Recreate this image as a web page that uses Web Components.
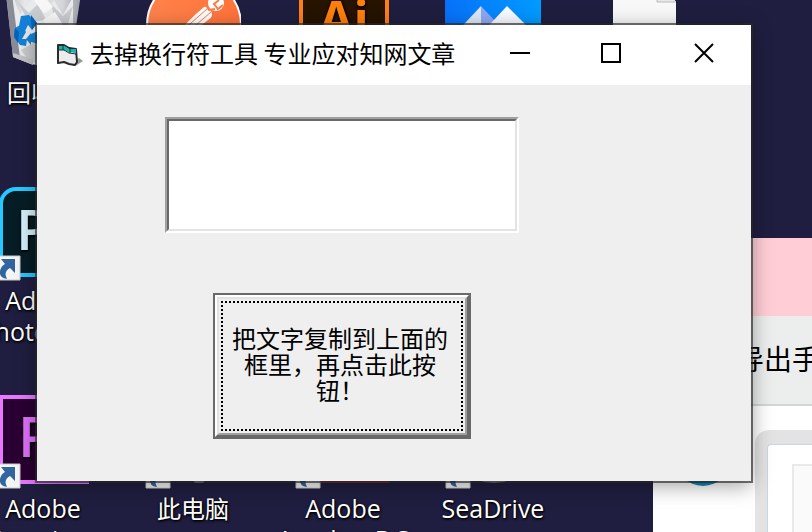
<!DOCTYPE html>
<html lang="zh-CN">
<head>
<meta charset="utf-8">
<title>去掉换行符工具</title>
<style>
html, body { height: 100%; margin: 0; overflow: hidden; }
body { background: #201e40; font: 24px/31px "Open Sans", "Noto Sans CJK SC", sans-serif; }
</style>
</head>
<body>
<desk-top>
  <desk-icon label="回收站">
    <svg viewBox="0 0 96 96" aria-hidden="true">
      <defs><linearGradient id="bin" x2="1"><stop stop-color="#b4b6bb"/><stop offset=".25" stop-color="#e6e7e8"/><stop offset=".75" stop-color="#d5d6d8"/><stop offset="1" stop-color="#9b9da8"/></linearGradient></defs>
      <path d="M11 17H86L76 82Q58 92 36 87L18 80Z" fill="url(#bin)"/>
      <path d="M17 17l8 20 13-16 10 18 11-16 9 15 10-18v30L66 82H36L22 76Z" fill="#e9eaeb"/>
      <path d="M22 24l12 12 9-9 8 16-17 2zM56 27l12 12 10-10-6 22-12-8zM26 73l14-8 8 20-13 1z" fill="#c9cbce"/>
      <path d="M38 22l10-4 10 12-9 7zM48 43l12-8 10 16-10 12z" fill="#f7f7f7"/>
      <path d="M11 17l7 63 7 1-8-64z" fill="#898b96"/>
      <path d="M18 76l20 6v6l-20-8z" fill="#c3c3c5"/>
      <path d="M26 39l8-1 8 8-5 7-4-5-3 6-6-5zM20 51l7-4 4 8-4 7h5l-1 7-6-1-6-9zM36 57l9-4-1 14-8-2v3l-5-6 5-6z" fill="#1581d8"/>
      <path d="M20 51l4 4-1 11-4-6zM36 38l6 8-5 7-1-8z" fill="#0563b7"/>
    </svg>
  </desk-icon>
  <desk-icon label="Adobe Photoshop" lang="en" shortcut>
    <svg viewBox="0 0 96 96" aria-hidden="true">
      <rect x="6" y="4" width="86" height="86" rx="15" fill="#071d26" stroke="#26c9ff" stroke-width="4"/>
      <text x="21" y="65" font-family="Open Sans, sans-serif" font-size="56" font-weight="600" fill="#d5f0fb">Ps</text>
    </svg>
  </desk-icon>
  <desk-icon label="Adobe Premiere" lang="en" shortcut>
    <svg viewBox="0 0 96 96" aria-hidden="true">
      <rect x="6" y="4" width="86" height="85" fill="#2a0032" stroke="#e878ff" stroke-width="4"/>
      <text x="23" y="64" font-family="Open Sans, sans-serif" font-size="56" font-weight="600" fill="#e070fa">Pr</text>
    </svg>
  </desk-icon>

  <desk-icon>
    <svg viewBox="0 0 96 96" aria-hidden="true">
      <defs><linearGradient id="pm" x2="1"><stop stop-color="#ff824b"/><stop offset="1" stop-color="#ff7339"/></linearGradient></defs>
      <circle cx="49" cy="48" r="47" fill="url(#pm)" stroke="#fff" stroke-width="2"/>
      <circle cx="71" cy="26" r="8" fill="#fff"/>
      <path d="M59 30Q63 29 66 34Q69 40 63 43L40 61L29 61Q42 44 59 30Z" fill="#fff"/>
      <path d="M62 32L30 60M66 35L37 60" stroke="#ff7b43" fill="none"/>
      <path d="M74 23l-5 4 4 5 5-4M61 28l3 5 6-1" stroke="#ff7b43" stroke-width="2" fill="none"/>
    </svg>
  </desk-icon>
  <desk-icon></desk-icon>
  <desk-icon label="此电脑" shortcut>
    <svg viewBox="0 0 96 96" aria-hidden="true"><path d="M46 85H62L58 90H50Z" fill="#a9b0b4"/></svg>
  </desk-icon>

  <desk-icon>
    <svg viewBox="0 0 96 96" aria-hidden="true">
      <rect x="6" y="5" width="86" height="86" fill="#261300" stroke="#ff7f18" stroke-width="4"/>
      <text x="24" y="60" font-family="Open Sans, sans-serif" font-size="50" font-weight="700" fill="#ff7f0b">Ai</text>
    </svg>
  </desk-icon>
  <desk-icon></desk-icon>
  <desk-icon label="Adobe Acrobat DC" lang="en" shortcut>
    <svg viewBox="0 0 96 96" aria-hidden="true"><rect x="5" y="4" width="89" height="86" fill="#b51e20"/></svg>
  </desk-icon>

  <desk-icon>
    <svg viewBox="0 0 96 96" aria-hidden="true">
      <defs><linearGradient id="mt" x2="1"><stop stop-color="#0870fa"/><stop offset="1" stop-color="#009cff"/></linearGradient></defs>
      <path d="M0 0H96V96H0Z" fill="url(#mt)"/>
      <path d="M36 29L6 61H36Z" fill="#dce8f8"/><path d="M36 29V61H66Z" fill="#8da8f4"/>
      <path d="M62 29L32 61H94Z" fill="#f8faff"/>
    </svg>
  </desk-icon>
  <desk-icon></desk-icon>
  <desk-icon label="SeaDrive" lang="en" shortcut>
    <svg viewBox="0 0 96 96" aria-hidden="true"><ellipse cx="49" cy="50" rx="43" ry="40" fill="#c9b8b4"/></svg>
  </desk-icon>

  <desk-icon>
    <svg viewBox="0 0 96 96" aria-hidden="true">
      <path d="M18 0H64L81 25V96H18Z" fill="#f8f8f9"/><path d="M62 0V25H81" fill="#e8e8e8" stroke="#b9b9b9"/>
    </svg>
  </desk-icon>
</desk-top>

<back-window>导出手机</back-window>

<app-window>
  <title-bar slot="bar">去掉换行符工具 专业应对知网文章</title-bar>
  <paste-form>把文字复制到上面的框里，再点击此按钮！</paste-form>
</app-window>

<script>
function define(name, html) {
  const template = document.createElement('template');
  template.innerHTML = html;
  customElements.define(name, class extends HTMLElement {
    constructor() {
      super();
      this.attachShadow({ mode: 'open' }).append(template.content.cloneNode(true));
    }
    connectedCallback() {
      const label = this.shadowRoot.querySelector('.label');
      if (label) label.textContent = this.getAttribute('label') || '';
    }
  });
}

define('desk-top', `
<style>
  :host { position: absolute; inset: 0; overflow: hidden; }
  .grid { display: grid; grid-template-rows: repeat(3, 208px); grid-auto-columns: 150px; grid-auto-flow: column; margin: -23px 0 0 -32px; }
</style>
<div class="grid"><slot></slot></div>`);

define('desk-icon', `
<style>
  :host { display: flex; flex-direction: column; align-items: center; gap: 4px; color: #fff; text-align: center;
    text-shadow: 1px 1px 2px #000, 0 1px 3px #000; }
  :host(:lang(en)) { font-size: 25px; }
  .icon { position: relative; width: 96px; height: 96px; flex: none; }
  ::slotted(svg) { display: block; width: 96px; height: 96px; }
  .arrow { display: none; position: absolute; left: 0; bottom: 0; width: 26px; height: 26px; }
  :host([shortcut]) .arrow { display: block; }
  .label { width: 140px; }
</style>
<div class="icon"><slot></slot>
  <svg class="arrow" viewBox="0 0 26 26" aria-hidden="true">
    <path d="M1 1H25V25H1Z" fill="#f5f5f5" stroke="#c9c9c9"/>
    <path d="M6 4H20V18L15 13Q8 17 12 24Q4 23 5 16Q6 11 10 9Z" fill="#31659f"/>
  </svg>
</div>
<div class="label"></div>`);

define('back-window', `
<style>
  :host { position: absolute; inset: 238px 0 0 653px; display: flex; flex-direction: column; background: #fff; overflow: hidden;
    font: 28px/36px "Noto Sans CJK SC", sans-serif; color: #000; }
  .band { flex: none; height: 78px; background: #ffcdd6; }
  .tools { flex: none; display: flex; align-items: center; box-sizing: border-box; height: 90px; padding: 0 0 4px 83px; background: #ebeeed; border-bottom: 2px solid #d5d5d5; white-space: nowrap; }
  .body { flex: 1; display: flex; gap: 24px; padding: 24px 0 0 22px; }
  .dot { flex: none; width: 56px; height: 56px; border-radius: 50%; background: #1485ac; }
  .panel { flex: 1; padding: 14px 0 0 12px; border-radius: 14px 0 0; background: #e3e3e3; }
  .page { box-sizing: border-box; height: 100%; padding: 19px 0 0 24px; border: solid #c5d8e4; border-width: 1px 0 0 1px; border-radius: 4px 0 0; background: #fff; }
  .sheet { box-sizing: border-box; height: 100%; border: solid #e9e9e9; border-width: 2px 0 0 2px; background: #fafafa; }
</style>
<div class="band"></div>
<div class="tools"><span><slot></slot></span></div>
<div class="body"><div class="dot"></div><div class="panel"><div class="page"><div class="sheet"></div></div></div></div>`);

define('app-window', `
<style>
  :host { position: absolute; inset: 25px 61px 51px 37px; display: flex; flex-direction: column; background: #efefef;
    box-shadow: 0 0 0 2px rgba(40,40,40,.65), 0 4px 20px rgba(0,0,0,.4); color: #000;
    font: 24px/26px "Noto Sans CJK SC", sans-serif; }
</style>
<slot name="bar"></slot><slot></slot>`);

define('title-bar', `
<style>
  :host { display: flex; align-items: center; height: 60px; padding-left: 19px; gap: 7px; background: #fff; }
  .app { flex: none; width: 27px; height: 24px; }
  .title { flex: 1; min-width: 0; white-space: nowrap; overflow: hidden; padding-bottom: 4px; line-height: 36px; }
  .controls { flex: none; display: flex; gap: 1px; height: 100%; padding-bottom: 4px; box-sizing: border-box; }
  button { display: grid; place-items: center; width: 90px; padding: 0; border: 0; background: none; }
  .close { width: 94px; }
  button svg { width: 20px; height: 20px; fill: none; stroke: #000; stroke-width: 2; }
</style>
<svg class="app" viewBox="0 0 27 24" aria-hidden="true">
  <path d="M17 20L23 15L27 18L21 22L17 23Z" fill="#9a9a9a"/>
  <path d="M2 2L8 2L13 5L20 6L21 19L19 22L13 21L8 19L2 20Z" fill="#ececec" stroke="#2b2b2b" stroke-width="2" stroke-linejoin="round"/>
  <path d="M3 3H8L13 6H20V10L13 9L8 7H3Z" fill="#12b5b2"/>
  <path d="M2 7H8L13 10L20 11M7 3V7M14 6V10" fill="none" stroke="#1d3232" stroke-width="1"/>
</svg>
<div class="title"><slot></slot></div>
<div class="controls">
  <button type="button" aria-label="最小化"><svg viewBox="0 0 20 20"><path d="M0 10H20"/></svg></button>
  <button type="button" aria-label="最大化"><svg viewBox="0 0 20 20"><path d="M1 1H19V19H1Z"/></svg></button>
  <button type="button" aria-label="关闭" class="close"><svg viewBox="0 0 20 20"><path d="M1 1L19 19M19 1L1 19"/></svg></button>
</div>`);

define('paste-form', `
<style>
  :host { flex: 1; display: flex; flex-direction: column; align-items: center; gap: 60px; padding: 32px 232px 32px 128px; }
  .well { display: flex; width: 100%; box-sizing: border-box; border: 2px solid; border-color: #a0a0a0 #fff #fff #a0a0a0; }
  textarea { flex: 1; min-width: 0; box-sizing: border-box; height: 112px; padding: 4px; resize: none; outline: 0; border: 2px solid;
    border-color: #696969 #e3e3e3 #e3e3e3 #696969; border-radius: 0; background: #fff; font: inherit; }
  button { box-sizing: border-box; width: 258px; padding: 0; border: 2px solid #696969; background: #efefef; color: #000; font: inherit; }
  .light { display: block; border: 2px solid; border-color: #fff #696969 #696969 #fff; }
  .shade { display: block; padding: 2px; border: 2px solid; border-color: #e3e3e3 #a0a0a0 #a0a0a0 #e3e3e3; }
  .focus { display: block; padding: 24px 12px 28px 8px;
    background:
      repeating-linear-gradient(90deg, #000 0 2px, transparent 2px 4px) top / 100% 2px no-repeat,
      repeating-linear-gradient(90deg, #000 0 2px, transparent 2px 4px) bottom / 100% 2px no-repeat,
      repeating-linear-gradient(#000 0 2px, transparent 2px 4px) left / 2px 100% no-repeat,
      repeating-linear-gradient(#000 0 2px, transparent 2px 4px) right / 2px 100% no-repeat; }
</style>
<div class="well"><textarea aria-label="文字"></textarea></div>
<button type="button"><span class="light"><span class="shade"><span class="focus"><slot></slot></span></span></span></button>`);
</script>
</body>
</html>
